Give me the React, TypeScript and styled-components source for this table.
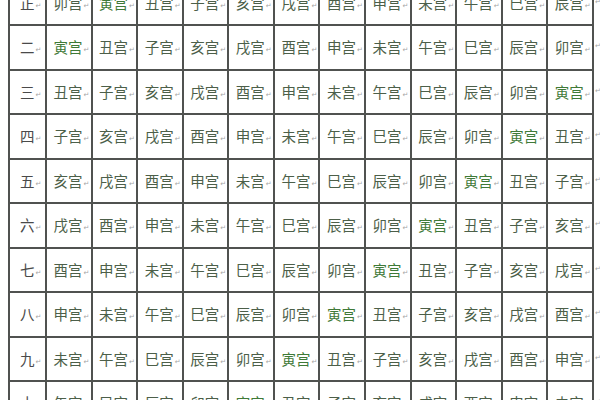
import React from "react";
import styled, { createGlobalStyle } from "styled-components";

const Global = createGlobalStyle`
  html, body {
    margin: 0;
    padding: 0;
    background: #ffffff;
  }
  body {
    font-family: "Noto Sans CJK SC", "Noto Sans", sans-serif;
  }
`;

const Page = styled.div`
  padding: 0 0 0 8px;
  margin-top: -20.5px;
  overflow: hidden;
`;

const Table = styled.table`
  border-collapse: collapse;
  table-layout: fixed;
  width: 592px;
`;

const Row = styled.tr`
  height: 44.5px;
`;

const Cell = styled.td<{ $label?: boolean; $accent?: boolean }>`
  border: 2px solid #505250;
  padding: 0 0 0 ${(p) => (p.$label ? "10px" : "6.5px")};
  font-size: 14.5px;
  line-height: 1;
  white-space: nowrap;
  vertical-align: middle;
  color: ${(p) => (p.$label ? "#4a4a4a" : p.$accent ? "#3f7a38" : "#4c5f49")};
  overflow: hidden;
`;

const EndCell = styled.td`
  border: none;
  padding: 0 0 0 1px;
  vertical-align: middle;
`;

const Mark = styled.span`
  font-family: "DejaVu Sans", sans-serif;
  font-size: 7px;
  color: #a5a5a5;
  margin-left: 1px;
  vertical-align: 1px;
`;

const EndMark = styled(Mark)`
  display: inline-block;
  margin: 0;
  transform: translateY(-5px);
`;

const branches = ["子", "丑", "寅", "卯", "辰", "巳", "午", "未", "申", "酉", "戌", "亥"];
const months = ["正", "二", "三", "四", "五", "六", "七", "八", "九", "十", "冬", "腊"];

export default function App() {
  return (
    <>
      <Global />
      <Page>
        <Table>
          <colgroup>
            <col style={{ width: 37 }} />
            {Array.from({ length: 12 }).map((_, i) => (
              <col key={i} style={{ width: 45.58 }} />
            ))}
            <col style={{ width: 8 }} />
          </colgroup>
          <tbody>
            {months.map((m, i) => (
              <Row key={m}>
                <Cell $label>
                  {m}
                  <Mark>↵</Mark>
                </Cell>
                {Array.from({ length: 12 }).map((_, j) => {
                  const b = branches[(((3 - i - j) % 12) + 24) % 12];
                  return (
                    <Cell key={j} $accent={b === "寅"}>
                      {b}宫
                      <Mark>↵</Mark>
                    </Cell>
                  );
                })}
                <EndCell>
                  <EndMark>↵</EndMark>
                </EndCell>
              </Row>
            ))}
          </tbody>
        </Table>
      </Page>
    </>
  );
}
